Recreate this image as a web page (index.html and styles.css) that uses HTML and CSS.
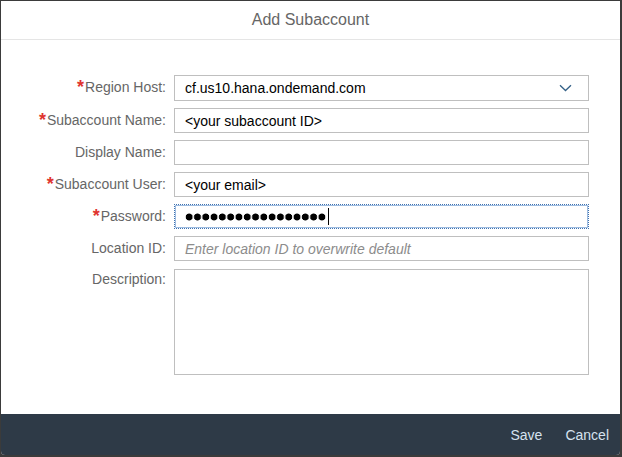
FILE: index.html
```html
<!DOCTYPE html>
<html>
<head>
<meta charset="utf-8">
<link rel="stylesheet" href="styles.css">
</head>
<body>
<div class="dialog">
  <div class="header">Add Subaccount</div>
  <div class="content">
    <form class="form">
      <label class="label"><span class="req">*</span>Region Host:</label>
      <div class="field select">
        <span class="value">cf.us10.hana.ondemand.com</span>
        <svg class="chev" width="13" height="8" viewBox="0 0 13 8"><path d="M1 1.2 L6.5 6.5 L12 1.2" fill="none" stroke="#346187" stroke-width="1.3"/></svg>
      </div>

      <label class="label"><span class="req">*</span>Subaccount Name:</label>
      <div class="field"><span class="value">&lt;your subaccount ID&gt;</span></div>

      <label class="label">Display Name:</label>
      <div class="field"></div>

      <label class="label"><span class="req">*</span>Subaccount User:</label>
      <div class="field"><span class="value">&lt;your email&gt;</span></div>

      <label class="label"><span class="req">*</span>Password:</label>
      <div class="field focused"><span class="dots"></span><span class="caret"></span></div>

      <label class="label">Location ID:</label>
      <div class="field"><span class="placeholder">Enter location ID to overwrite default</span></div>

      <label class="label label-top">Description:</label>
      <div class="field textarea"></div>
    </form>
  </div>
  <div class="footer">
    <span class="btn">Save</span>
    <span class="btn">Cancel</span>
  </div>
</div>
</body>
</html>
```
FILE: styles.css
```css
html, body {
  margin: 0;
  padding: 0;
}
body {
  background: #3b3b3b;
  width: 622px;
  height: 457px;
  overflow: hidden;
  font-family: "Liberation Sans", Arial, sans-serif;
  padding-top: 1px;
  padding-left: 1px;
  box-sizing: border-box;
}
.dialog {
  width: 619px;
  height: 454px;
  background: #fff;
  border-radius: 0 0 4px 4px;
  overflow: hidden;
  display: flex;
  flex-direction: column;
}
.header {
  height: 38px;
  line-height: 38px;
  border-bottom: 1px solid #e5e5e5;
  text-align: center;
  font-size: 16px;
  color: #666;
}
.content {
  flex: 1;
  padding-top: 35px;
}
.form {
  display: grid;
  grid-template-columns: 165px 415px;
  column-gap: 8px;
  row-gap: 7px;
  margin: 0;
}
.label {
  font-size: 14px;
  color: #666;
  text-align: right;
  line-height: 25px;
  white-space: nowrap;
}
.label-top {
  line-height: 22px;
}
.req {
  color: #e0342f;
  font-size: 18px;
  font-weight: bold;
  vertical-align: -1px;
  margin-right: 1px;
}
.field {
  box-sizing: border-box;
  height: 25px;
  border: 1px solid #bfbfbf;
  background: #fff;
  display: flex;
  align-items: center;
  padding: 0 10px;
  font-size: 14px;
  color: #000;
}
.select {
  height: 26px;
  justify-content: space-between;
  padding-right: 16px;
}
.chev {
  display: block;
}
.placeholder {
  color: #8c8c8c;
  font-style: italic;
}
.focused {
  border: 1px dotted #3f72b0;
  outline: 1px solid #9dbbe0;
  outline-offset: -2px;
}
.dots {
  display: inline-block;
  width: 141px;
  height: 8px;
  background-image: radial-gradient(circle, #000 3.2px, transparent 3.8px);
  background-size: 8.3px 8px;
  background-repeat: repeat-x;
}
.caret {
  display: inline-block;
  width: 1px;
  height: 17px;
  background: #000;
  margin-left: 2px;
}
.textarea {
  height: 106px;
  margin-top: 1px;
}
.footer {
  height: 40px;
  background: #2e3a47;
  display: flex;
  justify-content: flex-end;
  align-items: center;
  gap: 23px;
  padding-right: 11px;
  padding-top: 1px;
}
.btn {
  color: #d6e2ef;
  font-size: 14px;
}
```
